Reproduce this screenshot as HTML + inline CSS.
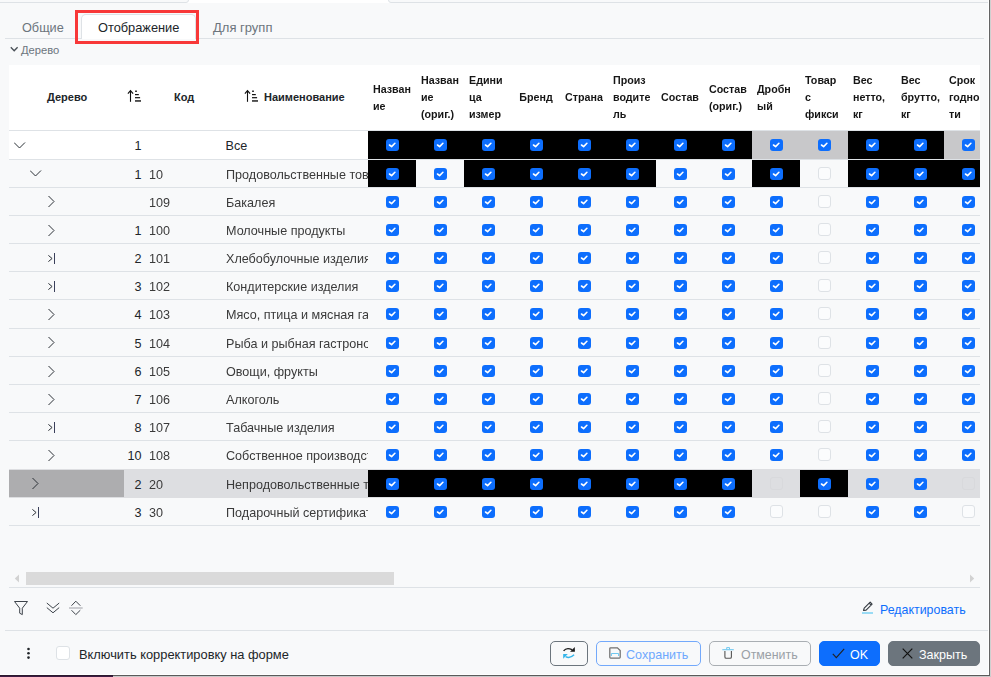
<!DOCTYPE html>
<html><head><meta charset="utf-8">
<style>
*{box-sizing:border-box;margin:0;padding:0}
html,body{width:991px;height:677px;overflow:hidden;background:#f8f9fa;font-family:"Liberation Sans",sans-serif;color:#212529;position:relative}
.abs{position:absolute}
.ic{position:absolute}
.cb{position:absolute;width:13px;height:12px;border-radius:3px;background:#0d6efd;overflow:hidden}
.cb svg{position:absolute;left:0;top:0}
.ub{position:absolute;width:13px;height:13px;border-radius:3px;background:#fbfcfd;border:1px solid #dee2e6}
.hl{position:absolute;font-weight:bold;font-size:10.7px;line-height:17px;white-space:nowrap;color:#212529}
.txt{position:absolute;white-space:nowrap;font-size:12.6px;line-height:16px;color:#3a3a3a;will-change:transform}
.btn{position:absolute;top:641px;height:25px;border-radius:5px;border:1px solid;font-size:13px;line-height:23px;white-space:nowrap}
</style></head><body>

<div class="abs" style="left:0;top:0;width:991px;height:3px;background:#fff"></div>
<div class="abs" style="left:-10px;top:-10px;width:199px;height:13px;background:#f8f9fa;border:1px solid #dee2e6;border-radius:3px"></div>
<div class="abs" style="left:388px;top:-10px;width:620px;height:13px;background:#f8f9fa;border:1px solid #dee2e6;border-radius:3px"></div>
<div class="abs" style="left:5px;top:38px;width:979px;height:1px;background:#dee2e6"></div>
<div class="abs" style="left:81px;top:14px;width:115px;height:25px;background:#fff;border:1px solid #dee2e6;border-bottom:none;border-radius:5px 5px 0 0"></div>
<div class="abs" style="left:22px;top:20px;font-size:12.7px;line-height:16px;color:#6c757d;white-space:nowrap">Общие</div>
<div class="abs" style="left:98px;top:20px;font-size:12.8px;line-height:16px;color:#212529;white-space:nowrap">Отображение</div>
<div class="abs" style="left:213px;top:20px;font-size:13px;line-height:16px;color:#6c757d;white-space:nowrap">Для групп</div>
<div class="abs" style="left:75px;top:10px;width:124px;height:34px;border:3px solid #f83838"></div>
<svg class="ic" style="left:9.5px;top:46px" width="10" height="7" viewBox="0 0 10 7"><path d="M0.8 1.3 L4.2 4.7 L7.6 1.3" fill="none" stroke="#495057" stroke-width="1.35"/></svg>
<div class="abs" style="left:21px;top:43px;font-size:11.2px;line-height:14px;color:#6c757d;white-space:nowrap">Дерево</div>
<div class="abs" style="left:9px;top:65px;width:971px;height:66px;background:#fff"></div>
<div class="hl" style="left:47px;top:89px;font-size:11px">Дерево</div>
<div class="abs" style="left:127px;top:89px;line-height:0"><svg width="16" height="14" viewBox="0 0 16 14"><path d="M3.5 12.8 V1.8" fill="none" stroke="#111" stroke-width="1.1"/><path d="M0.9 4.7 L3.5 1.7 L6.1 4.7" fill="none" stroke="#111" stroke-width="1.2"/><rect x="8" y="1.6" width="2" height="1.2" fill="#111"/><rect x="8" y="5" width="3.8" height="1.2" fill="#111"/><rect x="8" y="8.1" width="5.1" height="1.2" fill="#111"/><rect x="8" y="11.2" width="6" height="1.5" fill="#222"/></svg></div>
<div class="hl" style="left:174px;top:89px;font-size:11px">Код</div>
<div class="abs" style="left:244px;top:89px;line-height:0"><svg width="16" height="14" viewBox="0 0 16 14"><path d="M3.5 12.8 V1.8" fill="none" stroke="#111" stroke-width="1.1"/><path d="M0.9 4.7 L3.5 1.7 L6.1 4.7" fill="none" stroke="#111" stroke-width="1.2"/><rect x="8" y="1.6" width="2" height="1.2" fill="#111"/><rect x="8" y="5" width="3.8" height="1.2" fill="#111"/><rect x="8" y="8.1" width="5.1" height="1.2" fill="#111"/><rect x="8" y="11.2" width="6" height="1.5" fill="#222"/></svg></div>
<div class="hl" style="left:264px;top:89px;font-size:11px">Наименование</div>
<div class="hl" style="left:372.7px;top:80.75px;color:#161616;will-change:transform">Назван<br>ие</div>
<div class="hl" style="left:420.7px;top:72.25px;color:#161616;will-change:transform">Назван<br>ие<br>(ориг.)</div>
<div class="hl" style="left:468.7px;top:72.25px;color:#161616;will-change:transform">Едини<br>ца<br>измер</div>
<div class="hl" style="left:512px;top:89.25px;width:48px;text-align:center;color:#161616;will-change:transform">Бренд</div>
<div class="hl" style="left:560px;top:89.25px;width:48px;text-align:center;color:#161616;will-change:transform">Страна</div>
<div class="hl" style="left:612.7px;top:72.25px;color:#161616;will-change:transform">Произ<br>водите<br>ль</div>
<div class="hl" style="left:656px;top:89.25px;width:48px;text-align:center;color:#161616;will-change:transform">Состав</div>
<div class="hl" style="left:708.7px;top:80.75px;color:#161616;will-change:transform">Состав<br>(ориг.)</div>
<div class="hl" style="left:756.7px;top:80.75px;color:#161616;will-change:transform">Дробн<br>ый</div>
<div class="hl" style="left:804.7px;top:72.25px;color:#161616;will-change:transform">Товар<br>с<br>фикси</div>
<div class="hl" style="left:852.7px;top:72.25px;color:#161616;will-change:transform">Вес<br>нетто,<br>кг</div>
<div class="hl" style="left:900.7px;top:72.25px;color:#161616;will-change:transform">Вес<br>брутто,<br>кг</div>
<div class="hl" style="left:948.7px;top:72.25px;color:#161616;will-change:transform">Срок<br>годно<br>ти</div>
<div class="abs" style="left:9px;top:131px;width:971px;height:28px;background:#fff"></div>
<div class="abs" style="left:368px;top:131px;width:48px;height:28px;background:#000"></div>
<div class="abs" style="left:416px;top:131px;width:48px;height:28px;background:#000"></div>
<div class="abs" style="left:464px;top:131px;width:48px;height:28px;background:#000"></div>
<div class="abs" style="left:512px;top:131px;width:48px;height:28px;background:#000"></div>
<div class="abs" style="left:560px;top:131px;width:48px;height:28px;background:#000"></div>
<div class="abs" style="left:608px;top:131px;width:48px;height:28px;background:#000"></div>
<div class="abs" style="left:656px;top:131px;width:48px;height:28px;background:#000"></div>
<div class="abs" style="left:704px;top:131px;width:48px;height:28px;background:#000"></div>
<div class="abs" style="left:752px;top:131px;width:48px;height:28px;background:#c8c8ca"></div>
<div class="abs" style="left:800px;top:131px;width:48px;height:28px;background:#c8c8ca"></div>
<div class="abs" style="left:848px;top:131px;width:48px;height:28px;background:#000"></div>
<div class="abs" style="left:896px;top:131px;width:48px;height:28px;background:#000"></div>
<div class="abs" style="left:944px;top:131px;width:36px;height:28px;background:#c8c8ca"></div>
<div class="abs" style="left:9px;top:159px;width:971px;height:1px;background:#dee2e6"></div>
<svg class="ic" style="left:14px;top:142px" width="12" height="8" viewBox="0 0 12 8"><path d="M0 0.5 L5.5 6 L11 0.5" fill="none" stroke="#2b3036" stroke-width="1"/></svg>
<div class="txt" style="right:849.5px;top:138.00px;color:#212529;will-change:auto">1</div>
<div class="txt" style="left:225.6px;top:138.00px;width:142.4px;overflow:hidden;color:#212529;will-change:auto">Все</div>
<div class="cb" style="left:386px;top:139px"><svg width="13" height="12" viewBox="0 0 13 12"><path d="M3.5 6.0 L5.6 7.6 L8.9 4.3" fill="none" stroke="#fff" stroke-width="1.6" stroke-linecap="round" stroke-linejoin="round"/></svg></div>
<div class="cb" style="left:434px;top:139px"><svg width="13" height="12" viewBox="0 0 13 12"><path d="M3.5 6.0 L5.6 7.6 L8.9 4.3" fill="none" stroke="#fff" stroke-width="1.6" stroke-linecap="round" stroke-linejoin="round"/></svg></div>
<div class="cb" style="left:482px;top:139px"><svg width="13" height="12" viewBox="0 0 13 12"><path d="M3.5 6.0 L5.6 7.6 L8.9 4.3" fill="none" stroke="#fff" stroke-width="1.6" stroke-linecap="round" stroke-linejoin="round"/></svg></div>
<div class="cb" style="left:530px;top:139px"><svg width="13" height="12" viewBox="0 0 13 12"><path d="M3.5 6.0 L5.6 7.6 L8.9 4.3" fill="none" stroke="#fff" stroke-width="1.6" stroke-linecap="round" stroke-linejoin="round"/></svg></div>
<div class="cb" style="left:578px;top:139px"><svg width="13" height="12" viewBox="0 0 13 12"><path d="M3.5 6.0 L5.6 7.6 L8.9 4.3" fill="none" stroke="#fff" stroke-width="1.6" stroke-linecap="round" stroke-linejoin="round"/></svg></div>
<div class="cb" style="left:626px;top:139px"><svg width="13" height="12" viewBox="0 0 13 12"><path d="M3.5 6.0 L5.6 7.6 L8.9 4.3" fill="none" stroke="#fff" stroke-width="1.6" stroke-linecap="round" stroke-linejoin="round"/></svg></div>
<div class="cb" style="left:674px;top:139px"><svg width="13" height="12" viewBox="0 0 13 12"><path d="M3.5 6.0 L5.6 7.6 L8.9 4.3" fill="none" stroke="#fff" stroke-width="1.6" stroke-linecap="round" stroke-linejoin="round"/></svg></div>
<div class="cb" style="left:722px;top:139px"><svg width="13" height="12" viewBox="0 0 13 12"><path d="M3.5 6.0 L5.6 7.6 L8.9 4.3" fill="none" stroke="#fff" stroke-width="1.6" stroke-linecap="round" stroke-linejoin="round"/></svg></div>
<div class="cb" style="left:770px;top:139px"><svg width="13" height="12" viewBox="0 0 13 12"><path d="M3.5 6.0 L5.6 7.6 L8.9 4.3" fill="none" stroke="#fff" stroke-width="1.6" stroke-linecap="round" stroke-linejoin="round"/></svg></div>
<div class="cb" style="left:818px;top:139px"><svg width="13" height="12" viewBox="0 0 13 12"><path d="M3.5 6.0 L5.6 7.6 L8.9 4.3" fill="none" stroke="#fff" stroke-width="1.6" stroke-linecap="round" stroke-linejoin="round"/></svg></div>
<div class="cb" style="left:866px;top:139px"><svg width="13" height="12" viewBox="0 0 13 12"><path d="M3.5 6.0 L5.6 7.6 L8.9 4.3" fill="none" stroke="#fff" stroke-width="1.6" stroke-linecap="round" stroke-linejoin="round"/></svg></div>
<div class="cb" style="left:914px;top:139px"><svg width="13" height="12" viewBox="0 0 13 12"><path d="M3.5 6.0 L5.6 7.6 L8.9 4.3" fill="none" stroke="#fff" stroke-width="1.6" stroke-linecap="round" stroke-linejoin="round"/></svg></div>
<div class="cb" style="left:962px;top:139px"><svg width="13" height="12" viewBox="0 0 13 12"><path d="M3.5 6.0 L5.6 7.6 L8.9 4.3" fill="none" stroke="#fff" stroke-width="1.6" stroke-linecap="round" stroke-linejoin="round"/></svg></div>
<div class="abs" style="left:9px;top:160px;width:971px;height:27px;background:#f8f9fa"></div>
<div class="abs" style="left:368px;top:160px;width:48px;height:27px;background:#000"></div>
<div class="abs" style="left:464px;top:160px;width:48px;height:27px;background:#000"></div>
<div class="abs" style="left:512px;top:160px;width:48px;height:27px;background:#000"></div>
<div class="abs" style="left:560px;top:160px;width:48px;height:27px;background:#000"></div>
<div class="abs" style="left:608px;top:160px;width:48px;height:27px;background:#000"></div>
<div class="abs" style="left:752px;top:160px;width:48px;height:27px;background:#000"></div>
<div class="abs" style="left:848px;top:160px;width:48px;height:27px;background:#000"></div>
<div class="abs" style="left:896px;top:160px;width:48px;height:27px;background:#000"></div>
<div class="abs" style="left:944px;top:160px;width:36px;height:27px;background:#000"></div>
<div class="abs" style="left:9px;top:187px;width:971px;height:1px;background:#dee2e6"></div>
<svg class="ic" style="left:30px;top:170px" width="12" height="8" viewBox="0 0 12 8"><path d="M0 0.5 L5.5 6 L11 0.5" fill="none" stroke="#2b3036" stroke-width="1"/></svg>
<div class="txt" style="right:849.5px;top:167.00px;color:#212529;will-change:auto">1</div>
<div class="txt" style="left:149px;top:167.00px">10</div>
<div class="txt" style="left:225.6px;top:167.00px;width:142.4px;overflow:hidden">Продовольственные товары</div>
<div class="cb" style="left:386px;top:168px"><svg width="13" height="12" viewBox="0 0 13 12"><path d="M3.5 6.0 L5.6 7.6 L8.9 4.3" fill="none" stroke="#fff" stroke-width="1.6" stroke-linecap="round" stroke-linejoin="round"/></svg></div>
<div class="cb" style="left:434px;top:168px"><svg width="13" height="12" viewBox="0 0 13 12"><path d="M3.5 6.0 L5.6 7.6 L8.9 4.3" fill="none" stroke="#fff" stroke-width="1.6" stroke-linecap="round" stroke-linejoin="round"/></svg></div>
<div class="cb" style="left:482px;top:168px"><svg width="13" height="12" viewBox="0 0 13 12"><path d="M3.5 6.0 L5.6 7.6 L8.9 4.3" fill="none" stroke="#fff" stroke-width="1.6" stroke-linecap="round" stroke-linejoin="round"/></svg></div>
<div class="cb" style="left:530px;top:168px"><svg width="13" height="12" viewBox="0 0 13 12"><path d="M3.5 6.0 L5.6 7.6 L8.9 4.3" fill="none" stroke="#fff" stroke-width="1.6" stroke-linecap="round" stroke-linejoin="round"/></svg></div>
<div class="cb" style="left:578px;top:168px"><svg width="13" height="12" viewBox="0 0 13 12"><path d="M3.5 6.0 L5.6 7.6 L8.9 4.3" fill="none" stroke="#fff" stroke-width="1.6" stroke-linecap="round" stroke-linejoin="round"/></svg></div>
<div class="cb" style="left:626px;top:168px"><svg width="13" height="12" viewBox="0 0 13 12"><path d="M3.5 6.0 L5.6 7.6 L8.9 4.3" fill="none" stroke="#fff" stroke-width="1.6" stroke-linecap="round" stroke-linejoin="round"/></svg></div>
<div class="cb" style="left:674px;top:168px"><svg width="13" height="12" viewBox="0 0 13 12"><path d="M3.5 6.0 L5.6 7.6 L8.9 4.3" fill="none" stroke="#fff" stroke-width="1.6" stroke-linecap="round" stroke-linejoin="round"/></svg></div>
<div class="cb" style="left:722px;top:168px"><svg width="13" height="12" viewBox="0 0 13 12"><path d="M3.5 6.0 L5.6 7.6 L8.9 4.3" fill="none" stroke="#fff" stroke-width="1.6" stroke-linecap="round" stroke-linejoin="round"/></svg></div>
<div class="cb" style="left:770px;top:168px"><svg width="13" height="12" viewBox="0 0 13 12"><path d="M3.5 6.0 L5.6 7.6 L8.9 4.3" fill="none" stroke="#fff" stroke-width="1.6" stroke-linecap="round" stroke-linejoin="round"/></svg></div>
<div class="ub" style="left:818px;top:167px"></div>
<div class="cb" style="left:866px;top:168px"><svg width="13" height="12" viewBox="0 0 13 12"><path d="M3.5 6.0 L5.6 7.6 L8.9 4.3" fill="none" stroke="#fff" stroke-width="1.6" stroke-linecap="round" stroke-linejoin="round"/></svg></div>
<div class="cb" style="left:914px;top:168px"><svg width="13" height="12" viewBox="0 0 13 12"><path d="M3.5 6.0 L5.6 7.6 L8.9 4.3" fill="none" stroke="#fff" stroke-width="1.6" stroke-linecap="round" stroke-linejoin="round"/></svg></div>
<div class="cb" style="left:962px;top:168px"><svg width="13" height="12" viewBox="0 0 13 12"><path d="M3.5 6.0 L5.6 7.6 L8.9 4.3" fill="none" stroke="#fff" stroke-width="1.6" stroke-linecap="round" stroke-linejoin="round"/></svg></div>
<div class="abs" style="left:9px;top:188px;width:971px;height:27px;background:#f8f9fa"></div>
<div class="abs" style="left:9px;top:215px;width:971px;height:1px;background:#dee2e6"></div>
<svg class="ic" style="left:47px;top:195px" width="8" height="13" viewBox="0 0 8 13"><path d="M1.5 1 L7 6.5 L1.5 12" fill="none" stroke="#2b3036" stroke-width="1"/></svg>
<div class="txt" style="left:149px;top:195.00px">109</div>
<div class="txt" style="left:225.6px;top:195.00px;width:142.4px;overflow:hidden">Бакалея</div>
<div class="cb" style="left:386px;top:196px"><svg width="13" height="12" viewBox="0 0 13 12"><path d="M3.5 6.0 L5.6 7.6 L8.9 4.3" fill="none" stroke="#fff" stroke-width="1.6" stroke-linecap="round" stroke-linejoin="round"/></svg></div>
<div class="cb" style="left:434px;top:196px"><svg width="13" height="12" viewBox="0 0 13 12"><path d="M3.5 6.0 L5.6 7.6 L8.9 4.3" fill="none" stroke="#fff" stroke-width="1.6" stroke-linecap="round" stroke-linejoin="round"/></svg></div>
<div class="cb" style="left:482px;top:196px"><svg width="13" height="12" viewBox="0 0 13 12"><path d="M3.5 6.0 L5.6 7.6 L8.9 4.3" fill="none" stroke="#fff" stroke-width="1.6" stroke-linecap="round" stroke-linejoin="round"/></svg></div>
<div class="cb" style="left:530px;top:196px"><svg width="13" height="12" viewBox="0 0 13 12"><path d="M3.5 6.0 L5.6 7.6 L8.9 4.3" fill="none" stroke="#fff" stroke-width="1.6" stroke-linecap="round" stroke-linejoin="round"/></svg></div>
<div class="cb" style="left:578px;top:196px"><svg width="13" height="12" viewBox="0 0 13 12"><path d="M3.5 6.0 L5.6 7.6 L8.9 4.3" fill="none" stroke="#fff" stroke-width="1.6" stroke-linecap="round" stroke-linejoin="round"/></svg></div>
<div class="cb" style="left:626px;top:196px"><svg width="13" height="12" viewBox="0 0 13 12"><path d="M3.5 6.0 L5.6 7.6 L8.9 4.3" fill="none" stroke="#fff" stroke-width="1.6" stroke-linecap="round" stroke-linejoin="round"/></svg></div>
<div class="cb" style="left:674px;top:196px"><svg width="13" height="12" viewBox="0 0 13 12"><path d="M3.5 6.0 L5.6 7.6 L8.9 4.3" fill="none" stroke="#fff" stroke-width="1.6" stroke-linecap="round" stroke-linejoin="round"/></svg></div>
<div class="cb" style="left:722px;top:196px"><svg width="13" height="12" viewBox="0 0 13 12"><path d="M3.5 6.0 L5.6 7.6 L8.9 4.3" fill="none" stroke="#fff" stroke-width="1.6" stroke-linecap="round" stroke-linejoin="round"/></svg></div>
<div class="cb" style="left:770px;top:196px"><svg width="13" height="12" viewBox="0 0 13 12"><path d="M3.5 6.0 L5.6 7.6 L8.9 4.3" fill="none" stroke="#fff" stroke-width="1.6" stroke-linecap="round" stroke-linejoin="round"/></svg></div>
<div class="ub" style="left:818px;top:195px"></div>
<div class="cb" style="left:866px;top:196px"><svg width="13" height="12" viewBox="0 0 13 12"><path d="M3.5 6.0 L5.6 7.6 L8.9 4.3" fill="none" stroke="#fff" stroke-width="1.6" stroke-linecap="round" stroke-linejoin="round"/></svg></div>
<div class="cb" style="left:914px;top:196px"><svg width="13" height="12" viewBox="0 0 13 12"><path d="M3.5 6.0 L5.6 7.6 L8.9 4.3" fill="none" stroke="#fff" stroke-width="1.6" stroke-linecap="round" stroke-linejoin="round"/></svg></div>
<div class="cb" style="left:962px;top:196px"><svg width="13" height="12" viewBox="0 0 13 12"><path d="M3.5 6.0 L5.6 7.6 L8.9 4.3" fill="none" stroke="#fff" stroke-width="1.6" stroke-linecap="round" stroke-linejoin="round"/></svg></div>
<div class="abs" style="left:9px;top:216px;width:971px;height:27px;background:#f8f9fa"></div>
<div class="abs" style="left:9px;top:243px;width:971px;height:1px;background:#dee2e6"></div>
<svg class="ic" style="left:47px;top:224px" width="8" height="13" viewBox="0 0 8 13"><path d="M1.5 1 L7 6.5 L1.5 12" fill="none" stroke="#2b3036" stroke-width="1"/></svg>
<div class="txt" style="right:849.5px;top:223.00px;color:#212529;will-change:auto">1</div>
<div class="txt" style="left:149px;top:223.00px">100</div>
<div class="txt" style="left:225.6px;top:223.00px;width:142.4px;overflow:hidden">Молочные продукты</div>
<div class="cb" style="left:386px;top:224px"><svg width="13" height="12" viewBox="0 0 13 12"><path d="M3.5 6.0 L5.6 7.6 L8.9 4.3" fill="none" stroke="#fff" stroke-width="1.6" stroke-linecap="round" stroke-linejoin="round"/></svg></div>
<div class="cb" style="left:434px;top:224px"><svg width="13" height="12" viewBox="0 0 13 12"><path d="M3.5 6.0 L5.6 7.6 L8.9 4.3" fill="none" stroke="#fff" stroke-width="1.6" stroke-linecap="round" stroke-linejoin="round"/></svg></div>
<div class="cb" style="left:482px;top:224px"><svg width="13" height="12" viewBox="0 0 13 12"><path d="M3.5 6.0 L5.6 7.6 L8.9 4.3" fill="none" stroke="#fff" stroke-width="1.6" stroke-linecap="round" stroke-linejoin="round"/></svg></div>
<div class="cb" style="left:530px;top:224px"><svg width="13" height="12" viewBox="0 0 13 12"><path d="M3.5 6.0 L5.6 7.6 L8.9 4.3" fill="none" stroke="#fff" stroke-width="1.6" stroke-linecap="round" stroke-linejoin="round"/></svg></div>
<div class="cb" style="left:578px;top:224px"><svg width="13" height="12" viewBox="0 0 13 12"><path d="M3.5 6.0 L5.6 7.6 L8.9 4.3" fill="none" stroke="#fff" stroke-width="1.6" stroke-linecap="round" stroke-linejoin="round"/></svg></div>
<div class="cb" style="left:626px;top:224px"><svg width="13" height="12" viewBox="0 0 13 12"><path d="M3.5 6.0 L5.6 7.6 L8.9 4.3" fill="none" stroke="#fff" stroke-width="1.6" stroke-linecap="round" stroke-linejoin="round"/></svg></div>
<div class="cb" style="left:674px;top:224px"><svg width="13" height="12" viewBox="0 0 13 12"><path d="M3.5 6.0 L5.6 7.6 L8.9 4.3" fill="none" stroke="#fff" stroke-width="1.6" stroke-linecap="round" stroke-linejoin="round"/></svg></div>
<div class="cb" style="left:722px;top:224px"><svg width="13" height="12" viewBox="0 0 13 12"><path d="M3.5 6.0 L5.6 7.6 L8.9 4.3" fill="none" stroke="#fff" stroke-width="1.6" stroke-linecap="round" stroke-linejoin="round"/></svg></div>
<div class="cb" style="left:770px;top:224px"><svg width="13" height="12" viewBox="0 0 13 12"><path d="M3.5 6.0 L5.6 7.6 L8.9 4.3" fill="none" stroke="#fff" stroke-width="1.6" stroke-linecap="round" stroke-linejoin="round"/></svg></div>
<div class="ub" style="left:818px;top:223px"></div>
<div class="cb" style="left:866px;top:224px"><svg width="13" height="12" viewBox="0 0 13 12"><path d="M3.5 6.0 L5.6 7.6 L8.9 4.3" fill="none" stroke="#fff" stroke-width="1.6" stroke-linecap="round" stroke-linejoin="round"/></svg></div>
<div class="cb" style="left:914px;top:224px"><svg width="13" height="12" viewBox="0 0 13 12"><path d="M3.5 6.0 L5.6 7.6 L8.9 4.3" fill="none" stroke="#fff" stroke-width="1.6" stroke-linecap="round" stroke-linejoin="round"/></svg></div>
<div class="cb" style="left:962px;top:224px"><svg width="13" height="12" viewBox="0 0 13 12"><path d="M3.5 6.0 L5.6 7.6 L8.9 4.3" fill="none" stroke="#fff" stroke-width="1.6" stroke-linecap="round" stroke-linejoin="round"/></svg></div>
<div class="abs" style="left:9px;top:244px;width:971px;height:27px;background:#f8f9fa"></div>
<div class="abs" style="left:9px;top:271px;width:971px;height:1px;background:#dee2e6"></div>
<svg class="ic" style="left:47px;top:252px" width="9" height="13" viewBox="0 0 9 13"><path d="M1.4 3.4 L5.1 6.5 L1.4 9.6" fill="none" stroke="#2b3036" stroke-width="1"/><rect x="7" y="1" width="1" height="11" fill="#3a3f5a"/></svg>
<div class="txt" style="right:849.5px;top:251.00px;color:#212529;will-change:auto">2</div>
<div class="txt" style="left:149px;top:251.00px">101</div>
<div class="txt" style="left:225.6px;top:251.00px;width:142.4px;overflow:hidden">Хлебобулочные изделия</div>
<div class="cb" style="left:386px;top:252px"><svg width="13" height="12" viewBox="0 0 13 12"><path d="M3.5 6.0 L5.6 7.6 L8.9 4.3" fill="none" stroke="#fff" stroke-width="1.6" stroke-linecap="round" stroke-linejoin="round"/></svg></div>
<div class="cb" style="left:434px;top:252px"><svg width="13" height="12" viewBox="0 0 13 12"><path d="M3.5 6.0 L5.6 7.6 L8.9 4.3" fill="none" stroke="#fff" stroke-width="1.6" stroke-linecap="round" stroke-linejoin="round"/></svg></div>
<div class="cb" style="left:482px;top:252px"><svg width="13" height="12" viewBox="0 0 13 12"><path d="M3.5 6.0 L5.6 7.6 L8.9 4.3" fill="none" stroke="#fff" stroke-width="1.6" stroke-linecap="round" stroke-linejoin="round"/></svg></div>
<div class="cb" style="left:530px;top:252px"><svg width="13" height="12" viewBox="0 0 13 12"><path d="M3.5 6.0 L5.6 7.6 L8.9 4.3" fill="none" stroke="#fff" stroke-width="1.6" stroke-linecap="round" stroke-linejoin="round"/></svg></div>
<div class="cb" style="left:578px;top:252px"><svg width="13" height="12" viewBox="0 0 13 12"><path d="M3.5 6.0 L5.6 7.6 L8.9 4.3" fill="none" stroke="#fff" stroke-width="1.6" stroke-linecap="round" stroke-linejoin="round"/></svg></div>
<div class="cb" style="left:626px;top:252px"><svg width="13" height="12" viewBox="0 0 13 12"><path d="M3.5 6.0 L5.6 7.6 L8.9 4.3" fill="none" stroke="#fff" stroke-width="1.6" stroke-linecap="round" stroke-linejoin="round"/></svg></div>
<div class="cb" style="left:674px;top:252px"><svg width="13" height="12" viewBox="0 0 13 12"><path d="M3.5 6.0 L5.6 7.6 L8.9 4.3" fill="none" stroke="#fff" stroke-width="1.6" stroke-linecap="round" stroke-linejoin="round"/></svg></div>
<div class="cb" style="left:722px;top:252px"><svg width="13" height="12" viewBox="0 0 13 12"><path d="M3.5 6.0 L5.6 7.6 L8.9 4.3" fill="none" stroke="#fff" stroke-width="1.6" stroke-linecap="round" stroke-linejoin="round"/></svg></div>
<div class="cb" style="left:770px;top:252px"><svg width="13" height="12" viewBox="0 0 13 12"><path d="M3.5 6.0 L5.6 7.6 L8.9 4.3" fill="none" stroke="#fff" stroke-width="1.6" stroke-linecap="round" stroke-linejoin="round"/></svg></div>
<div class="ub" style="left:818px;top:251px"></div>
<div class="cb" style="left:866px;top:252px"><svg width="13" height="12" viewBox="0 0 13 12"><path d="M3.5 6.0 L5.6 7.6 L8.9 4.3" fill="none" stroke="#fff" stroke-width="1.6" stroke-linecap="round" stroke-linejoin="round"/></svg></div>
<div class="cb" style="left:914px;top:252px"><svg width="13" height="12" viewBox="0 0 13 12"><path d="M3.5 6.0 L5.6 7.6 L8.9 4.3" fill="none" stroke="#fff" stroke-width="1.6" stroke-linecap="round" stroke-linejoin="round"/></svg></div>
<div class="cb" style="left:962px;top:252px"><svg width="13" height="12" viewBox="0 0 13 12"><path d="M3.5 6.0 L5.6 7.6 L8.9 4.3" fill="none" stroke="#fff" stroke-width="1.6" stroke-linecap="round" stroke-linejoin="round"/></svg></div>
<div class="abs" style="left:9px;top:272px;width:971px;height:27px;background:#f8f9fa"></div>
<div class="abs" style="left:9px;top:299px;width:971px;height:1px;background:#dee2e6"></div>
<svg class="ic" style="left:47px;top:280px" width="9" height="13" viewBox="0 0 9 13"><path d="M1.4 3.4 L5.1 6.5 L1.4 9.6" fill="none" stroke="#2b3036" stroke-width="1"/><rect x="7" y="1" width="1" height="11" fill="#3a3f5a"/></svg>
<div class="txt" style="right:849.5px;top:279.00px;color:#212529;will-change:auto">3</div>
<div class="txt" style="left:149px;top:279.00px">102</div>
<div class="txt" style="left:225.6px;top:279.00px;width:142.4px;overflow:hidden">Кондитерские изделия</div>
<div class="cb" style="left:386px;top:280px"><svg width="13" height="12" viewBox="0 0 13 12"><path d="M3.5 6.0 L5.6 7.6 L8.9 4.3" fill="none" stroke="#fff" stroke-width="1.6" stroke-linecap="round" stroke-linejoin="round"/></svg></div>
<div class="cb" style="left:434px;top:280px"><svg width="13" height="12" viewBox="0 0 13 12"><path d="M3.5 6.0 L5.6 7.6 L8.9 4.3" fill="none" stroke="#fff" stroke-width="1.6" stroke-linecap="round" stroke-linejoin="round"/></svg></div>
<div class="cb" style="left:482px;top:280px"><svg width="13" height="12" viewBox="0 0 13 12"><path d="M3.5 6.0 L5.6 7.6 L8.9 4.3" fill="none" stroke="#fff" stroke-width="1.6" stroke-linecap="round" stroke-linejoin="round"/></svg></div>
<div class="cb" style="left:530px;top:280px"><svg width="13" height="12" viewBox="0 0 13 12"><path d="M3.5 6.0 L5.6 7.6 L8.9 4.3" fill="none" stroke="#fff" stroke-width="1.6" stroke-linecap="round" stroke-linejoin="round"/></svg></div>
<div class="cb" style="left:578px;top:280px"><svg width="13" height="12" viewBox="0 0 13 12"><path d="M3.5 6.0 L5.6 7.6 L8.9 4.3" fill="none" stroke="#fff" stroke-width="1.6" stroke-linecap="round" stroke-linejoin="round"/></svg></div>
<div class="cb" style="left:626px;top:280px"><svg width="13" height="12" viewBox="0 0 13 12"><path d="M3.5 6.0 L5.6 7.6 L8.9 4.3" fill="none" stroke="#fff" stroke-width="1.6" stroke-linecap="round" stroke-linejoin="round"/></svg></div>
<div class="cb" style="left:674px;top:280px"><svg width="13" height="12" viewBox="0 0 13 12"><path d="M3.5 6.0 L5.6 7.6 L8.9 4.3" fill="none" stroke="#fff" stroke-width="1.6" stroke-linecap="round" stroke-linejoin="round"/></svg></div>
<div class="cb" style="left:722px;top:280px"><svg width="13" height="12" viewBox="0 0 13 12"><path d="M3.5 6.0 L5.6 7.6 L8.9 4.3" fill="none" stroke="#fff" stroke-width="1.6" stroke-linecap="round" stroke-linejoin="round"/></svg></div>
<div class="cb" style="left:770px;top:280px"><svg width="13" height="12" viewBox="0 0 13 12"><path d="M3.5 6.0 L5.6 7.6 L8.9 4.3" fill="none" stroke="#fff" stroke-width="1.6" stroke-linecap="round" stroke-linejoin="round"/></svg></div>
<div class="ub" style="left:818px;top:279px"></div>
<div class="cb" style="left:866px;top:280px"><svg width="13" height="12" viewBox="0 0 13 12"><path d="M3.5 6.0 L5.6 7.6 L8.9 4.3" fill="none" stroke="#fff" stroke-width="1.6" stroke-linecap="round" stroke-linejoin="round"/></svg></div>
<div class="cb" style="left:914px;top:280px"><svg width="13" height="12" viewBox="0 0 13 12"><path d="M3.5 6.0 L5.6 7.6 L8.9 4.3" fill="none" stroke="#fff" stroke-width="1.6" stroke-linecap="round" stroke-linejoin="round"/></svg></div>
<div class="cb" style="left:962px;top:280px"><svg width="13" height="12" viewBox="0 0 13 12"><path d="M3.5 6.0 L5.6 7.6 L8.9 4.3" fill="none" stroke="#fff" stroke-width="1.6" stroke-linecap="round" stroke-linejoin="round"/></svg></div>
<div class="abs" style="left:9px;top:300px;width:971px;height:28px;background:#f8f9fa"></div>
<div class="abs" style="left:9px;top:328px;width:971px;height:1px;background:#dee2e6"></div>
<svg class="ic" style="left:47px;top:308px" width="8" height="13" viewBox="0 0 8 13"><path d="M1.5 1 L7 6.5 L1.5 12" fill="none" stroke="#2b3036" stroke-width="1"/></svg>
<div class="txt" style="right:849.5px;top:307.00px;color:#212529;will-change:auto">4</div>
<div class="txt" style="left:149px;top:307.00px">103</div>
<div class="txt" style="left:225.6px;top:307.00px;width:142.4px;overflow:hidden">Мясо, птица и мясная гастрономия</div>
<div class="cb" style="left:386px;top:308px"><svg width="13" height="12" viewBox="0 0 13 12"><path d="M3.5 6.0 L5.6 7.6 L8.9 4.3" fill="none" stroke="#fff" stroke-width="1.6" stroke-linecap="round" stroke-linejoin="round"/></svg></div>
<div class="cb" style="left:434px;top:308px"><svg width="13" height="12" viewBox="0 0 13 12"><path d="M3.5 6.0 L5.6 7.6 L8.9 4.3" fill="none" stroke="#fff" stroke-width="1.6" stroke-linecap="round" stroke-linejoin="round"/></svg></div>
<div class="cb" style="left:482px;top:308px"><svg width="13" height="12" viewBox="0 0 13 12"><path d="M3.5 6.0 L5.6 7.6 L8.9 4.3" fill="none" stroke="#fff" stroke-width="1.6" stroke-linecap="round" stroke-linejoin="round"/></svg></div>
<div class="cb" style="left:530px;top:308px"><svg width="13" height="12" viewBox="0 0 13 12"><path d="M3.5 6.0 L5.6 7.6 L8.9 4.3" fill="none" stroke="#fff" stroke-width="1.6" stroke-linecap="round" stroke-linejoin="round"/></svg></div>
<div class="cb" style="left:578px;top:308px"><svg width="13" height="12" viewBox="0 0 13 12"><path d="M3.5 6.0 L5.6 7.6 L8.9 4.3" fill="none" stroke="#fff" stroke-width="1.6" stroke-linecap="round" stroke-linejoin="round"/></svg></div>
<div class="cb" style="left:626px;top:308px"><svg width="13" height="12" viewBox="0 0 13 12"><path d="M3.5 6.0 L5.6 7.6 L8.9 4.3" fill="none" stroke="#fff" stroke-width="1.6" stroke-linecap="round" stroke-linejoin="round"/></svg></div>
<div class="cb" style="left:674px;top:308px"><svg width="13" height="12" viewBox="0 0 13 12"><path d="M3.5 6.0 L5.6 7.6 L8.9 4.3" fill="none" stroke="#fff" stroke-width="1.6" stroke-linecap="round" stroke-linejoin="round"/></svg></div>
<div class="cb" style="left:722px;top:308px"><svg width="13" height="12" viewBox="0 0 13 12"><path d="M3.5 6.0 L5.6 7.6 L8.9 4.3" fill="none" stroke="#fff" stroke-width="1.6" stroke-linecap="round" stroke-linejoin="round"/></svg></div>
<div class="cb" style="left:770px;top:308px"><svg width="13" height="12" viewBox="0 0 13 12"><path d="M3.5 6.0 L5.6 7.6 L8.9 4.3" fill="none" stroke="#fff" stroke-width="1.6" stroke-linecap="round" stroke-linejoin="round"/></svg></div>
<div class="ub" style="left:818px;top:307px"></div>
<div class="cb" style="left:866px;top:308px"><svg width="13" height="12" viewBox="0 0 13 12"><path d="M3.5 6.0 L5.6 7.6 L8.9 4.3" fill="none" stroke="#fff" stroke-width="1.6" stroke-linecap="round" stroke-linejoin="round"/></svg></div>
<div class="cb" style="left:914px;top:308px"><svg width="13" height="12" viewBox="0 0 13 12"><path d="M3.5 6.0 L5.6 7.6 L8.9 4.3" fill="none" stroke="#fff" stroke-width="1.6" stroke-linecap="round" stroke-linejoin="round"/></svg></div>
<div class="cb" style="left:962px;top:308px"><svg width="13" height="12" viewBox="0 0 13 12"><path d="M3.5 6.0 L5.6 7.6 L8.9 4.3" fill="none" stroke="#fff" stroke-width="1.6" stroke-linecap="round" stroke-linejoin="round"/></svg></div>
<div class="abs" style="left:9px;top:329px;width:971px;height:27px;background:#f8f9fa"></div>
<div class="abs" style="left:9px;top:356px;width:971px;height:1px;background:#dee2e6"></div>
<svg class="ic" style="left:47px;top:336px" width="8" height="13" viewBox="0 0 8 13"><path d="M1.5 1 L7 6.5 L1.5 12" fill="none" stroke="#2b3036" stroke-width="1"/></svg>
<div class="txt" style="right:849.5px;top:336.00px;color:#212529;will-change:auto">5</div>
<div class="txt" style="left:149px;top:336.00px">104</div>
<div class="txt" style="left:225.6px;top:336.00px;width:142.4px;overflow:hidden">Рыба и рыбная гастрономия</div>
<div class="cb" style="left:386px;top:337px"><svg width="13" height="12" viewBox="0 0 13 12"><path d="M3.5 6.0 L5.6 7.6 L8.9 4.3" fill="none" stroke="#fff" stroke-width="1.6" stroke-linecap="round" stroke-linejoin="round"/></svg></div>
<div class="cb" style="left:434px;top:337px"><svg width="13" height="12" viewBox="0 0 13 12"><path d="M3.5 6.0 L5.6 7.6 L8.9 4.3" fill="none" stroke="#fff" stroke-width="1.6" stroke-linecap="round" stroke-linejoin="round"/></svg></div>
<div class="cb" style="left:482px;top:337px"><svg width="13" height="12" viewBox="0 0 13 12"><path d="M3.5 6.0 L5.6 7.6 L8.9 4.3" fill="none" stroke="#fff" stroke-width="1.6" stroke-linecap="round" stroke-linejoin="round"/></svg></div>
<div class="cb" style="left:530px;top:337px"><svg width="13" height="12" viewBox="0 0 13 12"><path d="M3.5 6.0 L5.6 7.6 L8.9 4.3" fill="none" stroke="#fff" stroke-width="1.6" stroke-linecap="round" stroke-linejoin="round"/></svg></div>
<div class="cb" style="left:578px;top:337px"><svg width="13" height="12" viewBox="0 0 13 12"><path d="M3.5 6.0 L5.6 7.6 L8.9 4.3" fill="none" stroke="#fff" stroke-width="1.6" stroke-linecap="round" stroke-linejoin="round"/></svg></div>
<div class="cb" style="left:626px;top:337px"><svg width="13" height="12" viewBox="0 0 13 12"><path d="M3.5 6.0 L5.6 7.6 L8.9 4.3" fill="none" stroke="#fff" stroke-width="1.6" stroke-linecap="round" stroke-linejoin="round"/></svg></div>
<div class="cb" style="left:674px;top:337px"><svg width="13" height="12" viewBox="0 0 13 12"><path d="M3.5 6.0 L5.6 7.6 L8.9 4.3" fill="none" stroke="#fff" stroke-width="1.6" stroke-linecap="round" stroke-linejoin="round"/></svg></div>
<div class="cb" style="left:722px;top:337px"><svg width="13" height="12" viewBox="0 0 13 12"><path d="M3.5 6.0 L5.6 7.6 L8.9 4.3" fill="none" stroke="#fff" stroke-width="1.6" stroke-linecap="round" stroke-linejoin="round"/></svg></div>
<div class="cb" style="left:770px;top:337px"><svg width="13" height="12" viewBox="0 0 13 12"><path d="M3.5 6.0 L5.6 7.6 L8.9 4.3" fill="none" stroke="#fff" stroke-width="1.6" stroke-linecap="round" stroke-linejoin="round"/></svg></div>
<div class="ub" style="left:818px;top:336px"></div>
<div class="cb" style="left:866px;top:337px"><svg width="13" height="12" viewBox="0 0 13 12"><path d="M3.5 6.0 L5.6 7.6 L8.9 4.3" fill="none" stroke="#fff" stroke-width="1.6" stroke-linecap="round" stroke-linejoin="round"/></svg></div>
<div class="cb" style="left:914px;top:337px"><svg width="13" height="12" viewBox="0 0 13 12"><path d="M3.5 6.0 L5.6 7.6 L8.9 4.3" fill="none" stroke="#fff" stroke-width="1.6" stroke-linecap="round" stroke-linejoin="round"/></svg></div>
<div class="cb" style="left:962px;top:337px"><svg width="13" height="12" viewBox="0 0 13 12"><path d="M3.5 6.0 L5.6 7.6 L8.9 4.3" fill="none" stroke="#fff" stroke-width="1.6" stroke-linecap="round" stroke-linejoin="round"/></svg></div>
<div class="abs" style="left:9px;top:357px;width:971px;height:27px;background:#f8f9fa"></div>
<div class="abs" style="left:9px;top:384px;width:971px;height:1px;background:#dee2e6"></div>
<svg class="ic" style="left:47px;top:365px" width="8" height="13" viewBox="0 0 8 13"><path d="M1.5 1 L7 6.5 L1.5 12" fill="none" stroke="#2b3036" stroke-width="1"/></svg>
<div class="txt" style="right:849.5px;top:364.00px;color:#212529;will-change:auto">6</div>
<div class="txt" style="left:149px;top:364.00px">105</div>
<div class="txt" style="left:225.6px;top:364.00px;width:142.4px;overflow:hidden">Овощи, фрукты</div>
<div class="cb" style="left:386px;top:365px"><svg width="13" height="12" viewBox="0 0 13 12"><path d="M3.5 6.0 L5.6 7.6 L8.9 4.3" fill="none" stroke="#fff" stroke-width="1.6" stroke-linecap="round" stroke-linejoin="round"/></svg></div>
<div class="cb" style="left:434px;top:365px"><svg width="13" height="12" viewBox="0 0 13 12"><path d="M3.5 6.0 L5.6 7.6 L8.9 4.3" fill="none" stroke="#fff" stroke-width="1.6" stroke-linecap="round" stroke-linejoin="round"/></svg></div>
<div class="cb" style="left:482px;top:365px"><svg width="13" height="12" viewBox="0 0 13 12"><path d="M3.5 6.0 L5.6 7.6 L8.9 4.3" fill="none" stroke="#fff" stroke-width="1.6" stroke-linecap="round" stroke-linejoin="round"/></svg></div>
<div class="cb" style="left:530px;top:365px"><svg width="13" height="12" viewBox="0 0 13 12"><path d="M3.5 6.0 L5.6 7.6 L8.9 4.3" fill="none" stroke="#fff" stroke-width="1.6" stroke-linecap="round" stroke-linejoin="round"/></svg></div>
<div class="cb" style="left:578px;top:365px"><svg width="13" height="12" viewBox="0 0 13 12"><path d="M3.5 6.0 L5.6 7.6 L8.9 4.3" fill="none" stroke="#fff" stroke-width="1.6" stroke-linecap="round" stroke-linejoin="round"/></svg></div>
<div class="cb" style="left:626px;top:365px"><svg width="13" height="12" viewBox="0 0 13 12"><path d="M3.5 6.0 L5.6 7.6 L8.9 4.3" fill="none" stroke="#fff" stroke-width="1.6" stroke-linecap="round" stroke-linejoin="round"/></svg></div>
<div class="cb" style="left:674px;top:365px"><svg width="13" height="12" viewBox="0 0 13 12"><path d="M3.5 6.0 L5.6 7.6 L8.9 4.3" fill="none" stroke="#fff" stroke-width="1.6" stroke-linecap="round" stroke-linejoin="round"/></svg></div>
<div class="cb" style="left:722px;top:365px"><svg width="13" height="12" viewBox="0 0 13 12"><path d="M3.5 6.0 L5.6 7.6 L8.9 4.3" fill="none" stroke="#fff" stroke-width="1.6" stroke-linecap="round" stroke-linejoin="round"/></svg></div>
<div class="cb" style="left:770px;top:365px"><svg width="13" height="12" viewBox="0 0 13 12"><path d="M3.5 6.0 L5.6 7.6 L8.9 4.3" fill="none" stroke="#fff" stroke-width="1.6" stroke-linecap="round" stroke-linejoin="round"/></svg></div>
<div class="ub" style="left:818px;top:364px"></div>
<div class="cb" style="left:866px;top:365px"><svg width="13" height="12" viewBox="0 0 13 12"><path d="M3.5 6.0 L5.6 7.6 L8.9 4.3" fill="none" stroke="#fff" stroke-width="1.6" stroke-linecap="round" stroke-linejoin="round"/></svg></div>
<div class="cb" style="left:914px;top:365px"><svg width="13" height="12" viewBox="0 0 13 12"><path d="M3.5 6.0 L5.6 7.6 L8.9 4.3" fill="none" stroke="#fff" stroke-width="1.6" stroke-linecap="round" stroke-linejoin="round"/></svg></div>
<div class="cb" style="left:962px;top:365px"><svg width="13" height="12" viewBox="0 0 13 12"><path d="M3.5 6.0 L5.6 7.6 L8.9 4.3" fill="none" stroke="#fff" stroke-width="1.6" stroke-linecap="round" stroke-linejoin="round"/></svg></div>
<div class="abs" style="left:9px;top:385px;width:971px;height:27px;background:#f8f9fa"></div>
<div class="abs" style="left:9px;top:412px;width:971px;height:1px;background:#dee2e6"></div>
<svg class="ic" style="left:47px;top:393px" width="8" height="13" viewBox="0 0 8 13"><path d="M1.5 1 L7 6.5 L1.5 12" fill="none" stroke="#2b3036" stroke-width="1"/></svg>
<div class="txt" style="right:849.5px;top:392.00px;color:#212529;will-change:auto">7</div>
<div class="txt" style="left:149px;top:392.00px">106</div>
<div class="txt" style="left:225.6px;top:392.00px;width:142.4px;overflow:hidden">Алкоголь</div>
<div class="cb" style="left:386px;top:393px"><svg width="13" height="12" viewBox="0 0 13 12"><path d="M3.5 6.0 L5.6 7.6 L8.9 4.3" fill="none" stroke="#fff" stroke-width="1.6" stroke-linecap="round" stroke-linejoin="round"/></svg></div>
<div class="cb" style="left:434px;top:393px"><svg width="13" height="12" viewBox="0 0 13 12"><path d="M3.5 6.0 L5.6 7.6 L8.9 4.3" fill="none" stroke="#fff" stroke-width="1.6" stroke-linecap="round" stroke-linejoin="round"/></svg></div>
<div class="cb" style="left:482px;top:393px"><svg width="13" height="12" viewBox="0 0 13 12"><path d="M3.5 6.0 L5.6 7.6 L8.9 4.3" fill="none" stroke="#fff" stroke-width="1.6" stroke-linecap="round" stroke-linejoin="round"/></svg></div>
<div class="cb" style="left:530px;top:393px"><svg width="13" height="12" viewBox="0 0 13 12"><path d="M3.5 6.0 L5.6 7.6 L8.9 4.3" fill="none" stroke="#fff" stroke-width="1.6" stroke-linecap="round" stroke-linejoin="round"/></svg></div>
<div class="cb" style="left:578px;top:393px"><svg width="13" height="12" viewBox="0 0 13 12"><path d="M3.5 6.0 L5.6 7.6 L8.9 4.3" fill="none" stroke="#fff" stroke-width="1.6" stroke-linecap="round" stroke-linejoin="round"/></svg></div>
<div class="cb" style="left:626px;top:393px"><svg width="13" height="12" viewBox="0 0 13 12"><path d="M3.5 6.0 L5.6 7.6 L8.9 4.3" fill="none" stroke="#fff" stroke-width="1.6" stroke-linecap="round" stroke-linejoin="round"/></svg></div>
<div class="cb" style="left:674px;top:393px"><svg width="13" height="12" viewBox="0 0 13 12"><path d="M3.5 6.0 L5.6 7.6 L8.9 4.3" fill="none" stroke="#fff" stroke-width="1.6" stroke-linecap="round" stroke-linejoin="round"/></svg></div>
<div class="cb" style="left:722px;top:393px"><svg width="13" height="12" viewBox="0 0 13 12"><path d="M3.5 6.0 L5.6 7.6 L8.9 4.3" fill="none" stroke="#fff" stroke-width="1.6" stroke-linecap="round" stroke-linejoin="round"/></svg></div>
<div class="cb" style="left:770px;top:393px"><svg width="13" height="12" viewBox="0 0 13 12"><path d="M3.5 6.0 L5.6 7.6 L8.9 4.3" fill="none" stroke="#fff" stroke-width="1.6" stroke-linecap="round" stroke-linejoin="round"/></svg></div>
<div class="ub" style="left:818px;top:392px"></div>
<div class="cb" style="left:866px;top:393px"><svg width="13" height="12" viewBox="0 0 13 12"><path d="M3.5 6.0 L5.6 7.6 L8.9 4.3" fill="none" stroke="#fff" stroke-width="1.6" stroke-linecap="round" stroke-linejoin="round"/></svg></div>
<div class="cb" style="left:914px;top:393px"><svg width="13" height="12" viewBox="0 0 13 12"><path d="M3.5 6.0 L5.6 7.6 L8.9 4.3" fill="none" stroke="#fff" stroke-width="1.6" stroke-linecap="round" stroke-linejoin="round"/></svg></div>
<div class="cb" style="left:962px;top:393px"><svg width="13" height="12" viewBox="0 0 13 12"><path d="M3.5 6.0 L5.6 7.6 L8.9 4.3" fill="none" stroke="#fff" stroke-width="1.6" stroke-linecap="round" stroke-linejoin="round"/></svg></div>
<div class="abs" style="left:9px;top:413px;width:971px;height:27px;background:#f8f9fa"></div>
<div class="abs" style="left:9px;top:440px;width:971px;height:1px;background:#dee2e6"></div>
<svg class="ic" style="left:47px;top:421px" width="9" height="13" viewBox="0 0 9 13"><path d="M1.4 3.4 L5.1 6.5 L1.4 9.6" fill="none" stroke="#2b3036" stroke-width="1"/><rect x="7" y="1" width="1" height="11" fill="#3a3f5a"/></svg>
<div class="txt" style="right:849.5px;top:420.00px;color:#212529;will-change:auto">8</div>
<div class="txt" style="left:149px;top:420.00px">107</div>
<div class="txt" style="left:225.6px;top:420.00px;width:142.4px;overflow:hidden">Табачные изделия</div>
<div class="cb" style="left:386px;top:421px"><svg width="13" height="12" viewBox="0 0 13 12"><path d="M3.5 6.0 L5.6 7.6 L8.9 4.3" fill="none" stroke="#fff" stroke-width="1.6" stroke-linecap="round" stroke-linejoin="round"/></svg></div>
<div class="cb" style="left:434px;top:421px"><svg width="13" height="12" viewBox="0 0 13 12"><path d="M3.5 6.0 L5.6 7.6 L8.9 4.3" fill="none" stroke="#fff" stroke-width="1.6" stroke-linecap="round" stroke-linejoin="round"/></svg></div>
<div class="cb" style="left:482px;top:421px"><svg width="13" height="12" viewBox="0 0 13 12"><path d="M3.5 6.0 L5.6 7.6 L8.9 4.3" fill="none" stroke="#fff" stroke-width="1.6" stroke-linecap="round" stroke-linejoin="round"/></svg></div>
<div class="cb" style="left:530px;top:421px"><svg width="13" height="12" viewBox="0 0 13 12"><path d="M3.5 6.0 L5.6 7.6 L8.9 4.3" fill="none" stroke="#fff" stroke-width="1.6" stroke-linecap="round" stroke-linejoin="round"/></svg></div>
<div class="cb" style="left:578px;top:421px"><svg width="13" height="12" viewBox="0 0 13 12"><path d="M3.5 6.0 L5.6 7.6 L8.9 4.3" fill="none" stroke="#fff" stroke-width="1.6" stroke-linecap="round" stroke-linejoin="round"/></svg></div>
<div class="cb" style="left:626px;top:421px"><svg width="13" height="12" viewBox="0 0 13 12"><path d="M3.5 6.0 L5.6 7.6 L8.9 4.3" fill="none" stroke="#fff" stroke-width="1.6" stroke-linecap="round" stroke-linejoin="round"/></svg></div>
<div class="cb" style="left:674px;top:421px"><svg width="13" height="12" viewBox="0 0 13 12"><path d="M3.5 6.0 L5.6 7.6 L8.9 4.3" fill="none" stroke="#fff" stroke-width="1.6" stroke-linecap="round" stroke-linejoin="round"/></svg></div>
<div class="cb" style="left:722px;top:421px"><svg width="13" height="12" viewBox="0 0 13 12"><path d="M3.5 6.0 L5.6 7.6 L8.9 4.3" fill="none" stroke="#fff" stroke-width="1.6" stroke-linecap="round" stroke-linejoin="round"/></svg></div>
<div class="cb" style="left:770px;top:421px"><svg width="13" height="12" viewBox="0 0 13 12"><path d="M3.5 6.0 L5.6 7.6 L8.9 4.3" fill="none" stroke="#fff" stroke-width="1.6" stroke-linecap="round" stroke-linejoin="round"/></svg></div>
<div class="ub" style="left:818px;top:420px"></div>
<div class="cb" style="left:866px;top:421px"><svg width="13" height="12" viewBox="0 0 13 12"><path d="M3.5 6.0 L5.6 7.6 L8.9 4.3" fill="none" stroke="#fff" stroke-width="1.6" stroke-linecap="round" stroke-linejoin="round"/></svg></div>
<div class="cb" style="left:914px;top:421px"><svg width="13" height="12" viewBox="0 0 13 12"><path d="M3.5 6.0 L5.6 7.6 L8.9 4.3" fill="none" stroke="#fff" stroke-width="1.6" stroke-linecap="round" stroke-linejoin="round"/></svg></div>
<div class="cb" style="left:962px;top:421px"><svg width="13" height="12" viewBox="0 0 13 12"><path d="M3.5 6.0 L5.6 7.6 L8.9 4.3" fill="none" stroke="#fff" stroke-width="1.6" stroke-linecap="round" stroke-linejoin="round"/></svg></div>
<div class="abs" style="left:9px;top:441px;width:971px;height:28px;background:#f8f9fa"></div>
<svg class="ic" style="left:47px;top:449px" width="8" height="13" viewBox="0 0 8 13"><path d="M1.5 1 L7 6.5 L1.5 12" fill="none" stroke="#2b3036" stroke-width="1"/></svg>
<div class="txt" style="right:849.5px;top:448.00px;color:#212529;will-change:auto">10</div>
<div class="txt" style="left:149px;top:448.00px">108</div>
<div class="txt" style="left:225.6px;top:448.00px;width:142.4px;overflow:hidden">Собственное производство</div>
<div class="cb" style="left:386px;top:449px"><svg width="13" height="12" viewBox="0 0 13 12"><path d="M3.5 6.0 L5.6 7.6 L8.9 4.3" fill="none" stroke="#fff" stroke-width="1.6" stroke-linecap="round" stroke-linejoin="round"/></svg></div>
<div class="cb" style="left:434px;top:449px"><svg width="13" height="12" viewBox="0 0 13 12"><path d="M3.5 6.0 L5.6 7.6 L8.9 4.3" fill="none" stroke="#fff" stroke-width="1.6" stroke-linecap="round" stroke-linejoin="round"/></svg></div>
<div class="cb" style="left:482px;top:449px"><svg width="13" height="12" viewBox="0 0 13 12"><path d="M3.5 6.0 L5.6 7.6 L8.9 4.3" fill="none" stroke="#fff" stroke-width="1.6" stroke-linecap="round" stroke-linejoin="round"/></svg></div>
<div class="cb" style="left:530px;top:449px"><svg width="13" height="12" viewBox="0 0 13 12"><path d="M3.5 6.0 L5.6 7.6 L8.9 4.3" fill="none" stroke="#fff" stroke-width="1.6" stroke-linecap="round" stroke-linejoin="round"/></svg></div>
<div class="cb" style="left:578px;top:449px"><svg width="13" height="12" viewBox="0 0 13 12"><path d="M3.5 6.0 L5.6 7.6 L8.9 4.3" fill="none" stroke="#fff" stroke-width="1.6" stroke-linecap="round" stroke-linejoin="round"/></svg></div>
<div class="cb" style="left:626px;top:449px"><svg width="13" height="12" viewBox="0 0 13 12"><path d="M3.5 6.0 L5.6 7.6 L8.9 4.3" fill="none" stroke="#fff" stroke-width="1.6" stroke-linecap="round" stroke-linejoin="round"/></svg></div>
<div class="cb" style="left:674px;top:449px"><svg width="13" height="12" viewBox="0 0 13 12"><path d="M3.5 6.0 L5.6 7.6 L8.9 4.3" fill="none" stroke="#fff" stroke-width="1.6" stroke-linecap="round" stroke-linejoin="round"/></svg></div>
<div class="cb" style="left:722px;top:449px"><svg width="13" height="12" viewBox="0 0 13 12"><path d="M3.5 6.0 L5.6 7.6 L8.9 4.3" fill="none" stroke="#fff" stroke-width="1.6" stroke-linecap="round" stroke-linejoin="round"/></svg></div>
<div class="cb" style="left:770px;top:449px"><svg width="13" height="12" viewBox="0 0 13 12"><path d="M3.5 6.0 L5.6 7.6 L8.9 4.3" fill="none" stroke="#fff" stroke-width="1.6" stroke-linecap="round" stroke-linejoin="round"/></svg></div>
<div class="ub" style="left:818px;top:448px"></div>
<div class="cb" style="left:866px;top:449px"><svg width="13" height="12" viewBox="0 0 13 12"><path d="M3.5 6.0 L5.6 7.6 L8.9 4.3" fill="none" stroke="#fff" stroke-width="1.6" stroke-linecap="round" stroke-linejoin="round"/></svg></div>
<div class="cb" style="left:914px;top:449px"><svg width="13" height="12" viewBox="0 0 13 12"><path d="M3.5 6.0 L5.6 7.6 L8.9 4.3" fill="none" stroke="#fff" stroke-width="1.6" stroke-linecap="round" stroke-linejoin="round"/></svg></div>
<div class="cb" style="left:962px;top:449px"><svg width="13" height="12" viewBox="0 0 13 12"><path d="M3.5 6.0 L5.6 7.6 L8.9 4.3" fill="none" stroke="#fff" stroke-width="1.6" stroke-linecap="round" stroke-linejoin="round"/></svg></div>
<div class="abs" style="left:9px;top:469px;width:971px;height:29px;background:#dddee1"></div>
<div class="abs" style="left:9px;top:470px;width:115px;height:27px;background:#adadaf"></div>
<div class="abs" style="left:368px;top:470px;width:48px;height:27px;background:#000"></div>
<div class="abs" style="left:416px;top:470px;width:48px;height:27px;background:#000"></div>
<div class="abs" style="left:464px;top:470px;width:48px;height:27px;background:#000"></div>
<div class="abs" style="left:512px;top:470px;width:48px;height:27px;background:#000"></div>
<div class="abs" style="left:560px;top:470px;width:48px;height:27px;background:#000"></div>
<div class="abs" style="left:608px;top:470px;width:48px;height:27px;background:#000"></div>
<div class="abs" style="left:656px;top:470px;width:48px;height:27px;background:#000"></div>
<div class="abs" style="left:704px;top:470px;width:48px;height:27px;background:#000"></div>
<div class="abs" style="left:800px;top:470px;width:48px;height:27px;background:#000"></div>
<svg class="ic" style="left:31px;top:477px" width="8" height="13" viewBox="0 0 8 13"><path d="M1.5 1 L7 6.5 L1.5 12" fill="none" stroke="#2b3036" stroke-width="1"/></svg>
<div class="txt" style="right:849.5px;top:477.00px;color:#212529;will-change:auto">2</div>
<div class="txt" style="left:149px;top:477.00px">20</div>
<div class="txt" style="left:225.6px;top:477.00px;width:142.4px;overflow:hidden">Непродовольственные товары</div>
<div class="cb" style="left:386px;top:478px"><svg width="13" height="12" viewBox="0 0 13 12"><path d="M3.5 6.0 L5.6 7.6 L8.9 4.3" fill="none" stroke="#fff" stroke-width="1.6" stroke-linecap="round" stroke-linejoin="round"/></svg></div>
<div class="cb" style="left:434px;top:478px"><svg width="13" height="12" viewBox="0 0 13 12"><path d="M3.5 6.0 L5.6 7.6 L8.9 4.3" fill="none" stroke="#fff" stroke-width="1.6" stroke-linecap="round" stroke-linejoin="round"/></svg></div>
<div class="cb" style="left:482px;top:478px"><svg width="13" height="12" viewBox="0 0 13 12"><path d="M3.5 6.0 L5.6 7.6 L8.9 4.3" fill="none" stroke="#fff" stroke-width="1.6" stroke-linecap="round" stroke-linejoin="round"/></svg></div>
<div class="cb" style="left:530px;top:478px"><svg width="13" height="12" viewBox="0 0 13 12"><path d="M3.5 6.0 L5.6 7.6 L8.9 4.3" fill="none" stroke="#fff" stroke-width="1.6" stroke-linecap="round" stroke-linejoin="round"/></svg></div>
<div class="cb" style="left:578px;top:478px"><svg width="13" height="12" viewBox="0 0 13 12"><path d="M3.5 6.0 L5.6 7.6 L8.9 4.3" fill="none" stroke="#fff" stroke-width="1.6" stroke-linecap="round" stroke-linejoin="round"/></svg></div>
<div class="cb" style="left:626px;top:478px"><svg width="13" height="12" viewBox="0 0 13 12"><path d="M3.5 6.0 L5.6 7.6 L8.9 4.3" fill="none" stroke="#fff" stroke-width="1.6" stroke-linecap="round" stroke-linejoin="round"/></svg></div>
<div class="cb" style="left:674px;top:478px"><svg width="13" height="12" viewBox="0 0 13 12"><path d="M3.5 6.0 L5.6 7.6 L8.9 4.3" fill="none" stroke="#fff" stroke-width="1.6" stroke-linecap="round" stroke-linejoin="round"/></svg></div>
<div class="cb" style="left:722px;top:478px"><svg width="13" height="12" viewBox="0 0 13 12"><path d="M3.5 6.0 L5.6 7.6 L8.9 4.3" fill="none" stroke="#fff" stroke-width="1.6" stroke-linecap="round" stroke-linejoin="round"/></svg></div>
<div class="ub" style="left:770px;top:477px;background:transparent;border-color:#d8d9dc"></div>
<div class="cb" style="left:818px;top:478px"><svg width="13" height="12" viewBox="0 0 13 12"><path d="M3.5 6.0 L5.6 7.6 L8.9 4.3" fill="none" stroke="#fff" stroke-width="1.6" stroke-linecap="round" stroke-linejoin="round"/></svg></div>
<div class="cb" style="left:866px;top:478px"><svg width="13" height="12" viewBox="0 0 13 12"><path d="M3.5 6.0 L5.6 7.6 L8.9 4.3" fill="none" stroke="#fff" stroke-width="1.6" stroke-linecap="round" stroke-linejoin="round"/></svg></div>
<div class="cb" style="left:914px;top:478px"><svg width="13" height="12" viewBox="0 0 13 12"><path d="M3.5 6.0 L5.6 7.6 L8.9 4.3" fill="none" stroke="#fff" stroke-width="1.6" stroke-linecap="round" stroke-linejoin="round"/></svg></div>
<div class="ub" style="left:962px;top:477px;background:transparent;border-color:#d8d9dc"></div>
<div class="abs" style="left:9px;top:498px;width:971px;height:27px;background:#f8f9fa"></div>
<div class="abs" style="left:9px;top:525px;width:971px;height:1px;background:#dee2e6"></div>
<svg class="ic" style="left:31px;top:506px" width="9" height="13" viewBox="0 0 9 13"><path d="M1.4 3.4 L5.1 6.5 L1.4 9.6" fill="none" stroke="#2b3036" stroke-width="1"/><rect x="7" y="1" width="1" height="11" fill="#3a3f5a"/></svg>
<div class="txt" style="right:849.5px;top:505.00px;color:#212529;will-change:auto">3</div>
<div class="txt" style="left:149px;top:505.00px">30</div>
<div class="txt" style="left:225.6px;top:505.00px;width:142.4px;overflow:hidden">Подарочный сертификат</div>
<div class="cb" style="left:386px;top:506px"><svg width="13" height="12" viewBox="0 0 13 12"><path d="M3.5 6.0 L5.6 7.6 L8.9 4.3" fill="none" stroke="#fff" stroke-width="1.6" stroke-linecap="round" stroke-linejoin="round"/></svg></div>
<div class="cb" style="left:434px;top:506px"><svg width="13" height="12" viewBox="0 0 13 12"><path d="M3.5 6.0 L5.6 7.6 L8.9 4.3" fill="none" stroke="#fff" stroke-width="1.6" stroke-linecap="round" stroke-linejoin="round"/></svg></div>
<div class="cb" style="left:482px;top:506px"><svg width="13" height="12" viewBox="0 0 13 12"><path d="M3.5 6.0 L5.6 7.6 L8.9 4.3" fill="none" stroke="#fff" stroke-width="1.6" stroke-linecap="round" stroke-linejoin="round"/></svg></div>
<div class="cb" style="left:530px;top:506px"><svg width="13" height="12" viewBox="0 0 13 12"><path d="M3.5 6.0 L5.6 7.6 L8.9 4.3" fill="none" stroke="#fff" stroke-width="1.6" stroke-linecap="round" stroke-linejoin="round"/></svg></div>
<div class="cb" style="left:578px;top:506px"><svg width="13" height="12" viewBox="0 0 13 12"><path d="M3.5 6.0 L5.6 7.6 L8.9 4.3" fill="none" stroke="#fff" stroke-width="1.6" stroke-linecap="round" stroke-linejoin="round"/></svg></div>
<div class="cb" style="left:626px;top:506px"><svg width="13" height="12" viewBox="0 0 13 12"><path d="M3.5 6.0 L5.6 7.6 L8.9 4.3" fill="none" stroke="#fff" stroke-width="1.6" stroke-linecap="round" stroke-linejoin="round"/></svg></div>
<div class="cb" style="left:674px;top:506px"><svg width="13" height="12" viewBox="0 0 13 12"><path d="M3.5 6.0 L5.6 7.6 L8.9 4.3" fill="none" stroke="#fff" stroke-width="1.6" stroke-linecap="round" stroke-linejoin="round"/></svg></div>
<div class="cb" style="left:722px;top:506px"><svg width="13" height="12" viewBox="0 0 13 12"><path d="M3.5 6.0 L5.6 7.6 L8.9 4.3" fill="none" stroke="#fff" stroke-width="1.6" stroke-linecap="round" stroke-linejoin="round"/></svg></div>
<div class="ub" style="left:770px;top:505px"></div>
<div class="ub" style="left:818px;top:505px"></div>
<div class="cb" style="left:866px;top:506px"><svg width="13" height="12" viewBox="0 0 13 12"><path d="M3.5 6.0 L5.6 7.6 L8.9 4.3" fill="none" stroke="#fff" stroke-width="1.6" stroke-linecap="round" stroke-linejoin="round"/></svg></div>
<div class="cb" style="left:914px;top:506px"><svg width="13" height="12" viewBox="0 0 13 12"><path d="M3.5 6.0 L5.6 7.6 L8.9 4.3" fill="none" stroke="#fff" stroke-width="1.6" stroke-linecap="round" stroke-linejoin="round"/></svg></div>
<div class="ub" style="left:962px;top:505px"></div>
<div class="abs" style="left:9px;top:130px;width:971px;height:1px;background:#dee2e6"></div>
<svg class="ic" style="left:14px;top:574px" width="6" height="9" viewBox="0 0 6 9"><path d="M5 0.5 V8.5 L0.8 4.5 Z" fill="#d2d2d2"/></svg>
<div class="abs" style="left:26px;top:572px;width:368px;height:13px;background:#dadada"></div>
<svg class="ic" style="left:969px;top:574px" width="6" height="9" viewBox="0 0 6 9"><path d="M1 0.5 V8.5 L5.2 4.5 Z" fill="#d2d2d2"/></svg>
<div class="abs" style="left:9px;top:587px;width:971px;height:1px;background:#dee2e6"></div>
<svg class="ic" style="left:13px;top:600px" width="16" height="16" viewBox="0 0 16 16"><path d="M1.5 1.5 H14.5 L9.3 8.2 V14.6 L6.7 13.2 V8.2 Z" fill="none" stroke="#3d434a" stroke-width="1" stroke-linejoin="round"/></svg>
<svg class="ic" style="left:46px;top:602px" width="14" height="12" viewBox="0 0 14 12"><path d="M0.8 1 L7 6.2 L13.2 1 M0.8 5.6 L7 10.8 L13.2 5.6" fill="none" stroke="#3d434a" stroke-width="1"/></svg>
<svg class="ic" style="left:69px;top:600px" width="15" height="16" viewBox="0 0 15 16"><path d="M2.5 5.7 L6.8 1.2 L11.3 5.7 M2.5 10.2 L6.8 14.6 L11.3 10.2" fill="none" stroke="#3d434a" stroke-width="1"/><path d="M0 8 H13.7" stroke="#c3c5c8" stroke-width="1.7"/></svg>
<svg class="ic" style="left:861px;top:601px" width="13" height="13" viewBox="0 0 13 13"><path d="M2.5 9.5 L3.2 7.2 L9.2 1.2 L11.1 3.1 L5.1 9.1 Z M8.2 2.2 L10.1 4.1" fill="none" stroke="#343a40" stroke-width="1.1" stroke-linejoin="round"/><path d="M1 12 H12" stroke="#3dbef0" stroke-width="1"/></svg>
<div class="abs" style="left:880px;top:602px;font-size:12.4px;line-height:16px;color:#0d6efd;white-space:nowrap">Редактировать</div>
<div class="abs" style="left:5px;top:630px;width:983px;height:1px;background:#dee2e6"></div>
<svg class="ic" style="left:26px;top:647px" width="5" height="13" viewBox="0 0 5 13"><circle cx="2.5" cy="2" r="1.3" fill="#212529"/><circle cx="2.5" cy="6.3" r="1.3" fill="#212529"/><circle cx="2.5" cy="10.6" r="1.3" fill="#212529"/></svg>
<div class="abs" style="left:56px;top:646px;width:14px;height:14px;border-radius:3px;background:#fff;border:1px solid #dee2e6"></div>
<div class="abs" style="left:79px;top:647px;font-size:12.85px;line-height:16px;color:#212529;white-space:nowrap">Включить корректировку на форме</div>
<div class="btn" style="left:550px;width:38px;border-color:#6c757d"></div>
<svg class="ic" style="left:562px;top:647px" width="14" height="13" viewBox="0 0 14 13"><path d="M1.6 3.9 Q4.6 -0.1 10 2.7" fill="none" stroke="#1a1a1a" stroke-width="1.3"/><path d="M8.0 4.7 L12.9 4.7 L12.8 0.0 Z" fill="#1a1a1a"/><path d="M3.6 9.7 Q8 11.9 12.1 7.8" fill="none" stroke="#33b5ea" stroke-width="1.3"/><path d="M1.2 7.1 L5.8 7.1 L1.2 11.8 Z" fill="#33b5ea"/></svg>
<div class="btn" style="left:596px;width:105px;border-color:#73a9fb;color:#6ea8fe"></div>
<svg class="ic" style="left:609px;top:647px" width="13" height="13" viewBox="0 0 13 13"><path d="M0.8 1.6 Q0.8 0.8 1.6 0.8 H8.4 L11.2 3.6 V10.3 Q11.2 11.1 10.4 11.1 H1.6 Q0.8 11.1 0.8 10.3 Z" fill="none" stroke="#707070" stroke-width="1.25"/><path d="M2.4 9 V6.5 H9.6 V9" fill="none" stroke="#6ec8f0" stroke-width="1"/></svg>
<div class="abs" style="left:626px;top:647px;font-size:12.55px;line-height:16px;color:#6ea8fe;white-space:nowrap">Сохранить</div>
<div class="btn" style="left:709px;width:102px;border-color:#a9aeb3"></div>
<svg class="ic" style="left:722px;top:646px" width="13" height="14" viewBox="0 0 13 14"><path d="M0.3 3.7 H11.8" stroke="#6ec8f0" stroke-width="1.1"/><path d="M4.7 3.4 V1.6 H7.5 V3.4" fill="none" stroke="#6ec8f0" stroke-width="1"/><path d="M2.9 5 V10.9 Q2.9 12.2 4.2 12.2 H8.1 Q9.4 12.2 9.4 10.9 V5" fill="none" stroke="#555" stroke-width="1.1"/></svg>
<div class="abs" style="left:741px;top:647px;font-size:12.4px;line-height:16px;color:#9aa0a6;white-space:nowrap">Отменить</div>
<div class="btn" style="left:819px;width:61px;border-color:#0d6efd;background:#0d6efd"></div>
<svg class="ic" style="left:832px;top:648px" width="13" height="11" viewBox="0 0 13 11"><path d="M0.8 5.8 L4.3 9.6 L12.2 0.8" fill="none" stroke="#222" stroke-width="1.1"/></svg>
<div class="abs" style="left:850px;top:647px;font-size:12.5px;line-height:16px;color:#fff;white-space:nowrap">OK</div>
<div class="btn" style="left:888px;width:92px;border-color:#6c757d;background:#6c757d"></div>
<svg class="ic" style="left:902px;top:648px" width="11" height="11" viewBox="0 0 11 11"><path d="M0.7 0.7 L10.3 10.3 M10.3 0.7 L0.7 10.3" fill="none" stroke="#111" stroke-width="1.2"/></svg>
<div class="abs" style="left:919px;top:647px;font-size:12.55px;line-height:16px;color:#fff;white-space:nowrap">Закрыть</div>
<div class="abs" style="left:988px;top:0;width:1px;height:675px;background:#fff"></div>
<div class="abs" style="left:989px;top:0;width:1px;height:676px;background:#646464"></div>
<div class="abs" style="left:990px;top:0;width:1px;height:677px;background:#d0d0d0"></div>
<div class="abs" style="left:0;top:674px;width:989px;height:1px;background:#fff"></div>
<div class="abs" style="left:0;top:675px;width:990px;height:1px;background:#5a5a5a"></div>
<div class="abs" style="left:0;top:676px;width:991px;height:1px;background:#c8c8c8"></div>
<div class="abs" style="left:0;top:675px;width:113px;height:1px;background:#2b1a2e"></div>
<div class="abs" style="left:0;top:676px;width:113px;height:1px;background:#3e1a42"></div>
</body></html>
